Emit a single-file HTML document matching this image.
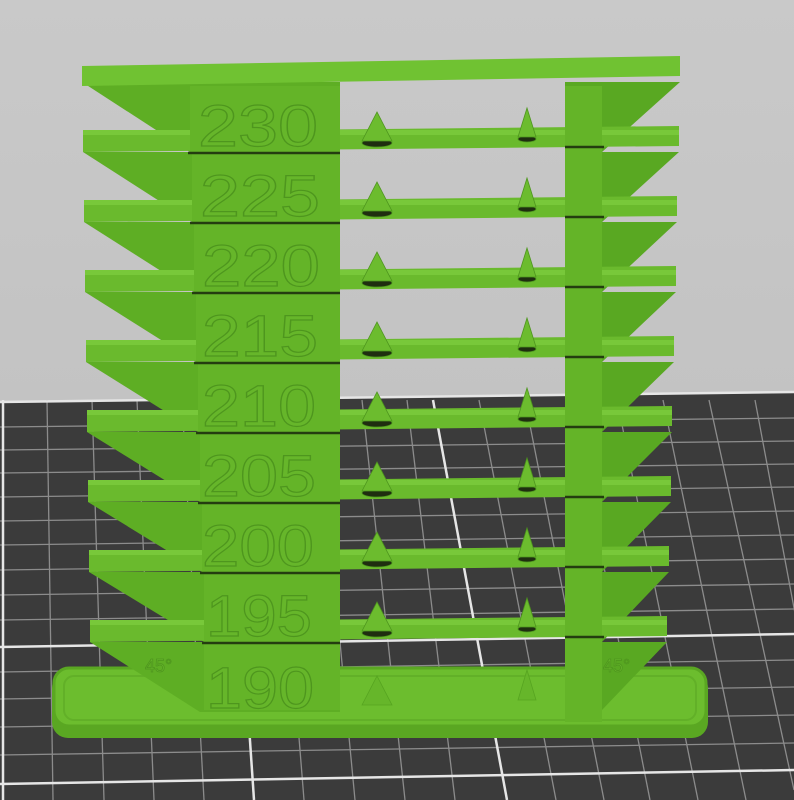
<!DOCTYPE html>
<html><head><meta charset="utf-8"><style>html,body{margin:0;padding:0;background:#c4c4c4}svg{display:block}</style></head>
<body>
<svg width="794" height="800" viewBox="0 0 794 800" xmlns="http://www.w3.org/2000/svg">
<defs>
<linearGradient id="bg" x1="0" y1="0" x2="0" y2="1"><stop offset="0" stop-color="#c9c9c9"/><stop offset="1" stop-color="#bdbdbd"/></linearGradient>
<g id="c" fill="#6cbc2e" stroke="#4e961e" stroke-width="0.8"><ellipse cx="377" cy="143" rx="15" ry="4" fill="#1f2e10"/><polygon points="362,141 377,112 392,141"/>
<ellipse cx="527" cy="139" rx="9" ry="3" fill="#1f2e10"/><polygon points="518,137 527,108 536,137"/></g>
</defs>
<rect width="794" height="800" fill="url(#bg)"/>
<polygon points="0,402 794,392 794,800 0,800" fill="#3b3b3b"/>
<g stroke="#8c8c8c" stroke-width="1.3" fill="none">
<line x1="0" y1="427" x2="794" y2="418"/><line x1="0" y1="450" x2="794" y2="441"/><line x1="0" y1="473" x2="794" y2="464"/>
<line x1="0" y1="497" x2="794" y2="487"/><line x1="0" y1="521" x2="794" y2="511"/><line x1="0" y1="545" x2="794" y2="535"/>
<line x1="0" y1="570" x2="794" y2="559"/><line x1="0" y1="595" x2="794" y2="584"/><line x1="0" y1="620" x2="794" y2="609"/>
<line x1="0" y1="672" x2="794" y2="660"/><line x1="0" y1="699" x2="794" y2="687"/><line x1="0" y1="727" x2="794" y2="715"/><line x1="0" y1="755" x2="794" y2="743"/>
<line x1="47" y1="400" x2="53" y2="800"/><line x1="92" y1="400" x2="104" y2="800"/><line x1="137" y1="400" x2="154" y2="800"/>
<line x1="182" y1="400" x2="204" y2="800"/><line x1="272" y1="400" x2="304" y2="800"/><line x1="317" y1="400" x2="355" y2="800"/>
<line x1="362" y1="400" x2="405" y2="800"/><line x1="407" y1="400" x2="455" y2="800"/><line x1="479" y1="400" x2="556" y2="800"/>
<line x1="525" y1="400" x2="604" y2="800"/><line x1="571" y1="400" x2="650" y2="800"/><line x1="617" y1="400" x2="698" y2="800"/>
<line x1="663" y1="400" x2="746" y2="800"/><line x1="709" y1="400" x2="794" y2="790"/><line x1="755" y1="400" x2="830" y2="800"/>
</g>
<g stroke="#e6e6e6" stroke-width="2.5" fill="none">
<line x1="0" y1="402" x2="794" y2="392"/><line x1="0" y1="647" x2="794" y2="634"/><line x1="0" y1="784" x2="794" y2="770"/>
<line x1="3" y1="400" x2="3" y2="800"/><line x1="227" y1="400" x2="254" y2="800"/><line x1="433" y1="400" x2="507" y2="800"/>
</g>

<rect x="52" y="672" width="656" height="66" rx="16" fill="#5aa722"/>
<rect x="54" y="668" width="652" height="58" rx="15" fill="#6cbd2e" stroke="#5aa722" stroke-width="3"/>
<rect x="64" y="676" width="632" height="44" rx="10" fill="none" stroke="#62b028" stroke-width="2"/>

<g fill="#5eae24">
<polygon points="82,82 190,152 340,152 340,82"/>
<polygon points="83,152 192,222 340,222 340,152"/>
<polygon points="84,222 194,292 340,292 340,222"/>
<polygon points="85,292 196,362 340,362 340,292"/>
<polygon points="86,362 198,432 340,432 340,362"/>
<polygon points="87,432 200,502 340,502 340,432"/>
<polygon points="88,502 202,572 340,572 340,502"/>
<polygon points="89,572 204,642 340,642 340,572"/>
<polygon points="90,642 200,712 340,712 340,642"/>
</g>
<g fill="#59a822">
<polygon points="565,82 680,82 602,152 565,152"/>
<polygon points="565,152 679,152 602,222 565,222"/>
<polygon points="565,222 677,222 602,292 565,292"/>
<polygon points="565,292 676,292 602,362 565,362"/>
<polygon points="565,362 674,362 602,432 565,432"/>
<polygon points="565,432 672,432 602,502 565,502"/>
<polygon points="565,502 671,502 602,572 565,572"/>
<polygon points="565,572 669,572 602,642 565,642"/>
<polygon points="565,642 667,642 602,710 565,710"/>
</g>

<g>
<polygon points="82,66 680,56 680,76 82,86" fill="#70c232"/>
<polygon points="83,132 679,126 679,146 83,152" fill="#6aba2d"/><rect x="83" y="130" width="596" height="5" fill="#78c83a"/>
<polygon points="84,202 677,196 677,216 84,222" fill="#6aba2d"/><rect x="84" y="200" width="593" height="5" fill="#78c83a"/>
<polygon points="85,272 676,266 676,286 85,292" fill="#6aba2d"/><rect x="85" y="270" width="591" height="5" fill="#78c83a"/>
<polygon points="86,342 674,336 674,356 86,362" fill="#6aba2d"/><rect x="86" y="340" width="588" height="5" fill="#78c83a"/>
<polygon points="87,412 672,406 672,426 87,432" fill="#6aba2d"/><rect x="87" y="410" width="585" height="5" fill="#78c83a"/>
<polygon points="88,482 671,476 671,496 88,502" fill="#6aba2d"/><rect x="88" y="480" width="583" height="5" fill="#78c83a"/>
<polygon points="89,552 669,546 669,566 89,572" fill="#6aba2d"/><rect x="89" y="550" width="580" height="5" fill="#78c83a"/>
<polygon points="90,622 667,616 667,636 90,642" fill="#6aba2d"/><rect x="90" y="620" width="577" height="5" fill="#78c83a"/>
</g>

<g fill="#64b428">
<rect x="190" y="86" width="150" height="66"/><rect x="192" y="152" width="148" height="70"/>
<rect x="194" y="222" width="146" height="70"/><rect x="196" y="292" width="144" height="70"/>
<rect x="198" y="362" width="142" height="70"/><rect x="200" y="432" width="140" height="70"/>
<rect x="202" y="502" width="138" height="70"/><rect x="204" y="572" width="136" height="70"/>
<rect x="204" y="642" width="136" height="68"/>
<rect x="565" y="86" width="37" height="636"/>
</g>
<g stroke="#243d10" stroke-width="2.5">
<line x1="188" y1="153" x2="340" y2="153"/><line x1="190" y1="223" x2="340" y2="223"/><line x1="192" y1="293" x2="340" y2="293"/>
<line x1="194" y1="363" x2="340" y2="363"/><line x1="196" y1="433" x2="340" y2="433"/><line x1="198" y1="503" x2="340" y2="503"/>
<line x1="200" y1="573" x2="340" y2="573"/><line x1="202" y1="643" x2="340" y2="643"/>
<line x1="565" y1="147" x2="604" y2="147"/><line x1="565" y1="217" x2="604" y2="217"/><line x1="565" y1="287" x2="604" y2="287"/>
<line x1="565" y1="357" x2="604" y2="357"/><line x1="565" y1="427" x2="604" y2="427"/><line x1="565" y1="497" x2="604" y2="497"/>
<line x1="565" y1="567" x2="604" y2="567"/><line x1="565" y1="637" x2="604" y2="637"/>
</g>

<g font-family="Liberation Sans, sans-serif" font-size="58" fill="#66b62a" stroke="#4e961e" stroke-width="1.2">
<text x="198" y="146" textLength="120" lengthAdjust="spacingAndGlyphs">230</text>
<text x="200" y="216" textLength="120" lengthAdjust="spacingAndGlyphs">225</text>
<text x="202" y="286" textLength="118" lengthAdjust="spacingAndGlyphs">220</text>
<text x="202" y="356" textLength="116" lengthAdjust="spacingAndGlyphs">215</text>
<text x="202" y="426" textLength="114" lengthAdjust="spacingAndGlyphs">210</text>
<text x="202" y="496" textLength="114" lengthAdjust="spacingAndGlyphs">205</text>
<text x="202" y="566" textLength="112" lengthAdjust="spacingAndGlyphs">200</text>
<text x="206" y="636" textLength="106" lengthAdjust="spacingAndGlyphs">195</text>
<text x="206" y="708" textLength="108" lengthAdjust="spacingAndGlyphs">190</text>
</g>
<g font-family="Liberation Sans, sans-serif" font-size="18" fill="#66b62a" stroke="#4e961e" stroke-width="0.8">
<text x="145" y="672">45°</text><text x="603" y="672">45°</text>
</g>

<use href="#c"/><use href="#c" y="70"/><use href="#c" y="140"/><use href="#c" y="210"/><use href="#c" y="280"/>
<use href="#c" y="350"/><use href="#c" y="420"/><use href="#c" y="490"/>
<g fill="#66b62a" stroke="#56a420" stroke-width="0.8">
<polygon points="362,705 377,676 392,705"/><polygon points="518,700 527,670 536,700"/>
</g>
</svg>
</body></html>
